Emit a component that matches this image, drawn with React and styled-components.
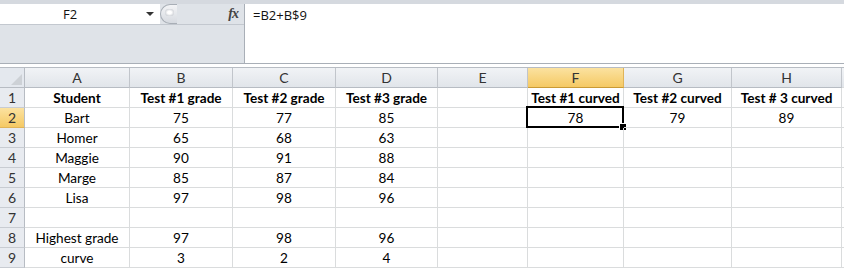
import React from "react";
import styled, { createGlobalStyle } from "styled-components";

const GlobalStyle = createGlobalStyle`
  html, body {
    margin: 0;
    padding: 0;
    background: #ffffff;
    overflow: hidden;
  }
`;

const columns = [
  { key: "A", width: 105 },
  { key: "B", width: 103 },
  { key: "C", width: 103 },
  { key: "D", width: 102 },
  { key: "E", width: 90 },
  { key: "F", width: 96 },
  { key: "G", width: 108 },
  { key: "H", width: 110 },
];

const rows = [
  ["Student", "Test #1 grade", "Test #2 grade", "Test #3 grade", "", "Test #1 curved", "Test #2 curved", "Test # 3 curved"],
  ["Bart", "75", "77", "85", "", "78", "79", "89"],
  ["Homer", "65", "68", "63", "", "", "", ""],
  ["Maggie", "90", "91", "88", "", "", "", ""],
  ["Marge", "85", "87", "84", "", "", "", ""],
  ["Lisa", "97", "98", "96", "", "", "", ""],
  ["", "", "", "", "", "", "", ""],
  ["Highest grade", "97", "98", "96", "", "", "", ""],
  ["curve", "3", "2", "4", "", "", "", ""],
];

const Page = styled.div`
  width: 844px;
  height: 268px;
  display: flex;
  flex-direction: column;
  font-family: Lato, "Open Sans", sans-serif;
`;

const FormulaArea = styled.div`
  height: 61px;
  border-top: 4px solid #d5d9df;
  border-bottom: 1px solid #a9afb7;
  display: flex;
  background: #dfe3e8;
`;

const LeftPanel = styled.div`
  width: 244px;
  border-right: 1px solid #a9afb7;
  display: flex;
  flex-direction: column;
`;

const NameRow = styled.div`
  height: 20px;
  display: flex;
  align-items: center;
  border-bottom: 1px solid #c3c8cf;
`;

const NameBox = styled.div`
  width: 160px;
  height: 20px;
  background: #ffffff;
  display: flex;
  align-items: center;
  position: relative;
  font-family: "Open Sans", sans-serif;
  font-size: 13px;
  color: #111;
  justify-content: center;
  padding-right: 20px;
  box-sizing: border-box;
`;

const DropArrow = styled.span`
  position: absolute;
  right: 6px;
  top: 8px;
  width: 0;
  height: 0;
  border-left: 4px solid transparent;
  border-right: 4px solid transparent;
  border-top: 4px solid #333;
`;

const Grip = styled.div`
  width: 17px;
  height: 20px;
  border-radius: 11px 0 0 11px;
  border: 1px solid #a8aeb6;
  border-right: none;
  background: linear-gradient(#f3f4f6, #d6dae0);
  display: flex;
  align-items: center;
  padding-left: 4px;
  box-sizing: border-box;
`;

const GripDot = styled.div`
  width: 9px;
  height: 7px;
  margin-top: -3px;
  border-radius: 5px;
  background: radial-gradient(#ffffff 30%, #b3b8c0);
`;

const FxLabel = styled.div`
  margin-left: auto;
  margin-right: 6px;
  font-family: "Liberation Serif", serif;
  font-style: italic;
  font-weight: bold;
  font-size: 14px;
  color: #444;
  letter-spacing: -1px;
`;

const FormulaInput = styled.div`
  flex: 1;
  background: #ffffff;
  padding: 2px 8px;
  font-family: "Open Sans", sans-serif;
  font-size: 13px;
  color: #111;
`;

const Gap = styled.div`
  height: 3px;
  background: #ffffff;
`;

const Sheet = styled.div`
  display: grid;
  grid-template-columns: 25px ${columns.map((c) => c.width + "px").join(" ")} 1fr;
  grid-auto-rows: 20px;
  border-top: 1px solid #b7bcc3;
`;

const Corner = styled.div`
  background: #e4e8ee;
  border-right: 1px solid #b7bcc3;
  border-bottom: 1px solid #b7bcc3;
  position: relative;
  &::after {
    content: "";
    position: absolute;
    right: 2px;
    bottom: 2px;
    border-left: 11px solid transparent;
    border-bottom: 11px solid #cdd1d6;
  }
`;

const ColHead = styled.div`
  background: ${(p) =>
    p.$active
      ? "linear-gradient(#fbe2a0, #f5c964)"
      : "linear-gradient(#f1f3f6, #e1e5ea)"};
  border-right: 1px solid ${(p) => (p.$active ? "#e0b458" : "#c1c5cb")};
  border-bottom: 1px solid ${(p) => (p.$active ? "#c99a35" : "#b7bcc3")};
  display: flex;
  align-items: center;
  justify-content: center;
  font-size: 14px;
  color: #333;
`;

const RowHead = styled.div`
  background: ${(p) =>
    p.$active
      ? "linear-gradient(#fbe2a0, #f5c964)"
      : "#e8ebf0"};
  border-right: 1px solid #b7bcc3;
  border-bottom: 1px solid ${(p) => (p.$active ? "#e0b458" : "#c8ccd2")};
  display: flex;
  align-items: center;
  justify-content: center;
  font-size: 14px;
  color: #333;
`;

const Cell = styled.div`
  border-right: 1px solid #dadcdd;
  border-bottom: 1px solid #dadcdd;
  display: flex;
  align-items: center;
  justify-content: center;
  font-size: 13.6px;
  font-weight: ${(p) => (p.$bold ? 700 : 400)};
  color: #000;
  white-space: nowrap;
  position: relative;
`;

const Selection = styled.div`
  position: absolute;
  left: -2px;
  top: -2px;
  right: -1px;
  bottom: -1px;
  border: 2px solid #000;
  &::after {
    content: "";
    position: absolute;
    right: -5px;
    bottom: -5px;
    width: 6px;
    height: 6px;
    background: #000;
    border: 1px solid #fff;
  }
`;

const Filler = styled.div`
  border-bottom: 1px solid #dadcdd;
  background: ${(p) => (p.$head ? "linear-gradient(#f1f3f6, #e1e5ea)" : "#fff")};
`;

export default function App() {
  return (
    <Page>
      <GlobalStyle />
      <FormulaArea>
        <LeftPanel>
          <NameRow>
            <NameBox>
              F2
              <DropArrow />
            </NameBox>
            <Grip>
              <GripDot />
            </Grip>
            <FxLabel>fx</FxLabel>
          </NameRow>
        </LeftPanel>
        <FormulaInput>=B2+B$9</FormulaInput>
      </FormulaArea>
      <Gap />
      <Sheet>
        <Corner />
        {columns.map((c) => (
          <ColHead key={c.key} $active={c.key === "F"}>
            {c.key}
          </ColHead>
        ))}
        <Filler $head />
        {rows.map((r, i) => (
          <React.Fragment key={i}>
            <RowHead $active={i === 1}>{i + 1}</RowHead>
            {r.map((v, j) => (
              <Cell key={j} $bold={i === 0}>
                {v}
                {i === 1 && j === 5 && <Selection />}
              </Cell>
            ))}
            <Filler />
          </React.Fragment>
        ))}
      </Sheet>
    </Page>
  );
}
